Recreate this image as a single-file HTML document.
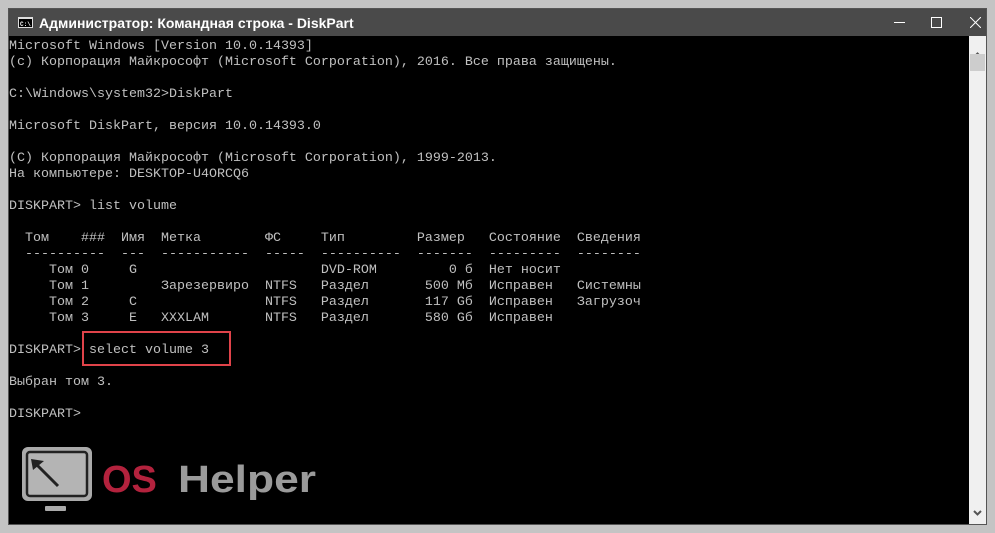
<!DOCTYPE html><html><head><meta charset="utf-8"><style>
body{margin:0;width:995px;height:533px;background:#c4c4c4;position:relative;overflow:hidden}
#win{position:absolute;left:8px;top:8px;width:979px;height:517px;background:#000;border:1px solid #555;box-sizing:border-box}
#title{position:absolute;left:0;top:0;right:0;height:27px;background:#4a4a4a;color:#fff;font:bold 14px "Liberation Sans","Noto Sans CJK JP",sans-serif;}
#title span{position:absolute;left:30px;top:6px}
#term{position:absolute;left:0px;top:30px;margin:0;font:13.33px/16px "Liberation Mono","DejaVu Sans Mono",monospace;color:#c0c0c0;white-space:pre}
#sb{position:absolute;right:0;top:27px;width:17px;bottom:0;background:#f0f0f0}
.box{position:absolute;left:82px;top:331px;width:149px;height:35px;border:2px solid #e0434a;box-sizing:border-box}
</style></head><body>
<div id="win">
<div id="title"><svg style="position:absolute;left:9px;top:8px" width="15" height="11"><rect x="0.5" y="0.5" width="14" height="10" fill="#000" stroke="#ddd"/><rect x="0" y="0" width="15" height="2" fill="#ddd"/><text x="2" y="9" font-size="6" fill="#fff" font-family="Liberation Mono">C:\</text></svg><span>Администратор: Командная строка - DiskPart</span>
<div style="position:absolute;left:885px;top:13px;width:11px;height:1px;background:#fff"></div>
<div style="position:absolute;left:922px;top:8px;width:9px;height:9px;border:1px solid #fff"></div>
<svg style="position:absolute;left:961px;top:8px" width="11" height="11"><path d="M0 0L11 11M11 0L0 11" stroke="#fff"/></svg>
</div>
<pre id="term">Microsoft Windows [Version 10.0.14393]
(c) Корпорация Майкрософт (Microsoft Corporation), 2016. Все права защищены.

C:\Windows\system32>DiskPart

Microsoft DiskPart, версия 10.0.14393.0

(C) Корпорация Майкрософт (Microsoft Corporation), 1999-2013.
На компьютере: DESKTOP-U4ORCQ6

DISKPART&gt; list volume

  Том    ###  Имя  Метка        ФС     Тип         Размер   Состояние  Сведения
  ----------  ---  -----------  -----  ----------  -------  ---------  --------
     Том 0     G                       DVD-ROM         0 б  Нет носит
     Том 1         Зарезервиро  NTFS   Раздел       500 Мб  Исправен   Системны
     Том 2     C                NTFS   Раздел       117 Gб  Исправен   Загрузоч
     Том 3     E   XXXLAM       NTFS   Раздел       580 Gб  Исправен

DISKPART&gt; select volume 3

Выбран том 3.

DISKPART&gt;</pre>
<div id="sb"><svg style="position:absolute;left:4px;top:16px" width="9" height="6"><path d="M1 5L4.5 1.5L8 5" stroke="#555" stroke-width="2" fill="none"/></svg>
<div style="position:absolute;left:1px;top:18px;width:15px;height:17px;background:#cdcdcd"></div>
<svg style="position:absolute;left:4px;bottom:8px" width="9" height="6"><path d="M1 1L4.5 4.5L8 1" stroke="#555" stroke-width="2" fill="none"/></svg></div>
</div>
<div class="box"></div>
<svg style="position:absolute;left:20px;top:445px" width="300" height="70">
<rect x="3" y="3" width="68" height="52" rx="5" fill="#aaa" stroke="#aaa" stroke-width="2"/>
<rect x="7" y="7" width="60" height="44" rx="3" fill="#b4b4b4" stroke="#222" stroke-width="2.5"/>
<rect x="25" y="61" width="21" height="5" rx="1" fill="#aaa"/>
<path d="M38 41L14 17" stroke="#222" stroke-width="3"/><path d="M11 14L24 16L13 25Z" fill="#222"/>
<text x="82" y="47" font-family="Liberation Sans" font-weight="bold" font-size="38" fill="#b3223d">OS</text>
<text x="158" y="47" font-family="Liberation Sans" font-weight="bold" font-size="38" fill="#9a9a9a" textLength="138" lengthAdjust="spacingAndGlyphs">Helper</text>
</svg>
</body></html>
